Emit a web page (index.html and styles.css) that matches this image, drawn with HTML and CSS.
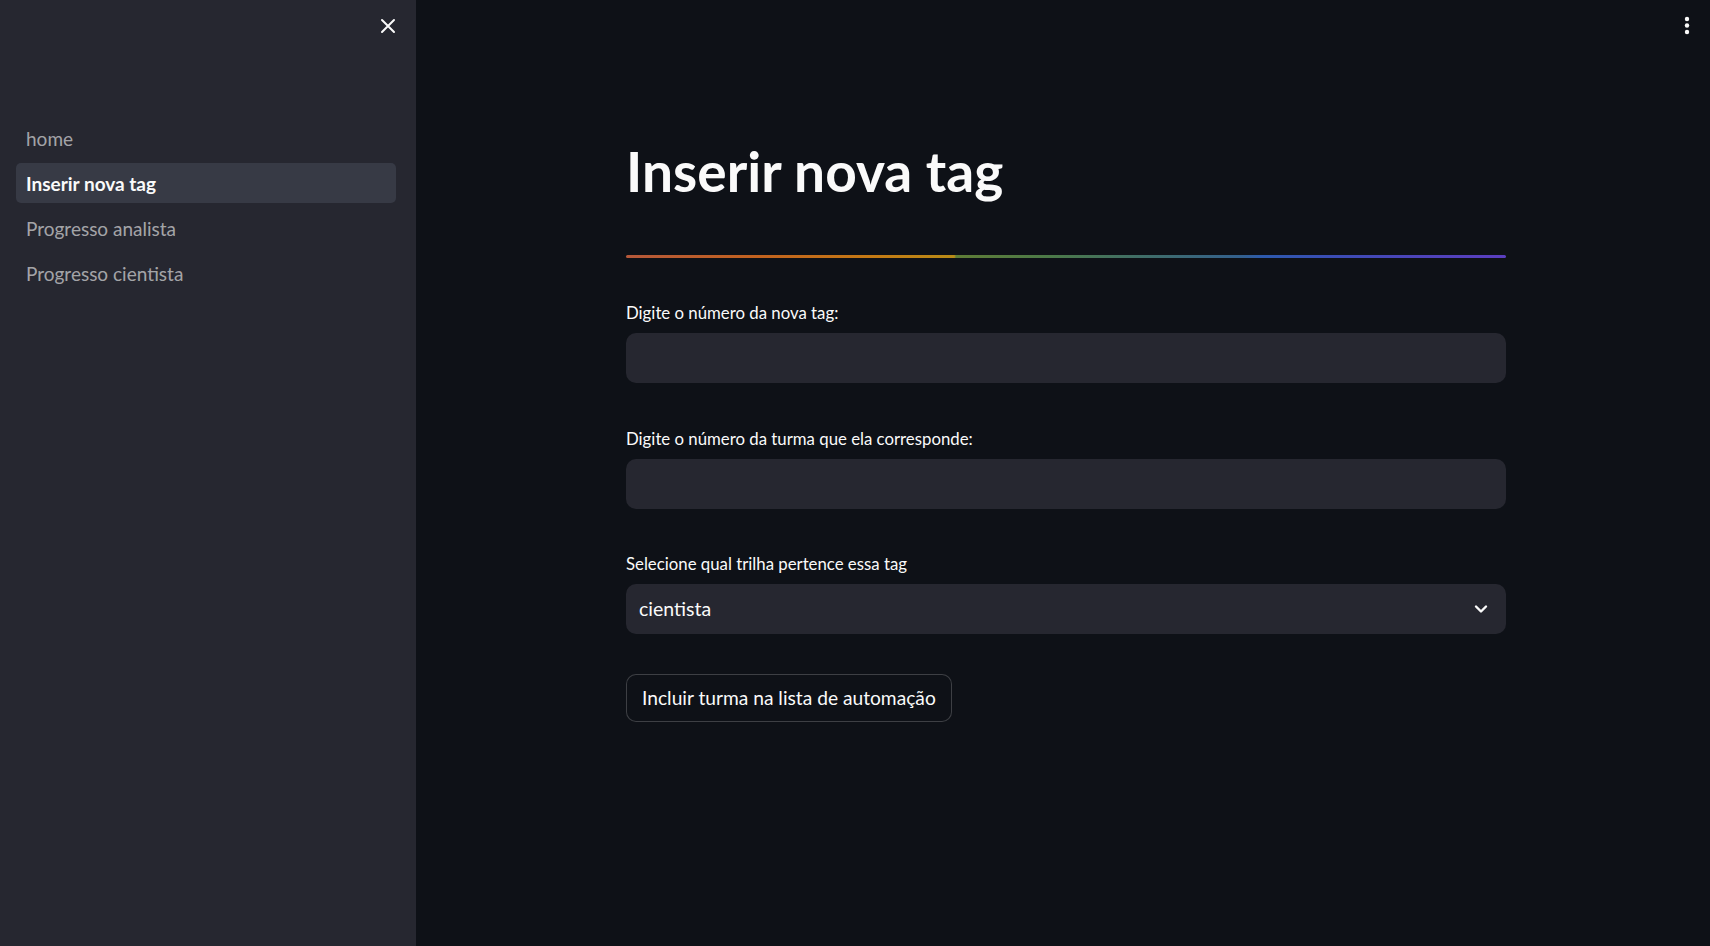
FILE: index.html
```html
<!DOCTYPE html>
<html lang="pt">
<head>
<meta charset="utf-8">
<title>Inserir nova tag</title>
<link rel="stylesheet" href="styles.css">
</head>
<body>
<div class="app">
  <aside class="sidebar">
    <div class="sidebar-header">
      <button class="close-btn" aria-label="Fechar">
        <svg width="16" height="16" viewBox="0 0 16 16"><path d="M2 2 L14 14 M14 2 L2 14" stroke="#fafafa" stroke-width="2" stroke-linecap="round" fill="none"/></svg>
      </button>
    </div>
    <nav class="nav">
      <a class="nav-item">home</a>
      <a class="nav-item active">Inserir nova tag</a>
      <a class="nav-item">Progresso analista</a>
      <a class="nav-item">Progresso cientista</a>
    </nav>
  </aside>
  <main class="main">
    <button class="menu-btn" aria-label="Menu">
      <svg width="6" height="20" viewBox="0 0 6 20"><circle cx="3" cy="3" r="2.2" fill="#fafafa"/><circle cx="3" cy="9.5" r="2.2" fill="#fafafa"/><circle cx="3" cy="16" r="2.2" fill="#fafafa"/></svg>
    </button>
    <div class="content">
      <h1 class="title">Inserir nova tag</h1>
      <div class="divider"></div>
      <div class="field">
        <label class="label">Digite o número da nova tag:</label>
        <div class="input"></div>
      </div>
      <div class="field">
        <label class="label">Digite o número da turma que ela corresponde:</label>
        <div class="input"></div>
      </div>
      <div class="field">
        <label class="label">Selecione qual trilha pertence essa tag</label>
        <div class="input select">
          <span class="select-value">cientista</span>
          <svg class="chevron" width="14" height="10" viewBox="0 0 14 10"><path d="M2 2.5 L7 7.5 L12 2.5" stroke="#fafafa" stroke-width="2.4" fill="none" stroke-linecap="round" stroke-linejoin="round"/></svg>
        </div>
      </div>
      <button class="btn">Incluir turma na lista de automação</button>
    </div>
  </main>
</div>
</body>
</html>
```
FILE: styles.css
```css
* { box-sizing: border-box; }
html, body { margin: 0; padding: 0; height: 100%; }
body {
  background: #0e1117;
  color: #fafafa;
  font-family: "Lato", "Noto Sans", sans-serif;
}
.app { display: flex; height: 100vh; }

.sidebar {
  width: 416px;
  flex: 0 0 416px;
  background: #262730;
  display: flex;
  flex-direction: column;
}
.sidebar-header {
  display: flex;
  justify-content: flex-end;
  padding: 18px 20px 0 0;
  height: 118px;
}
.close-btn {
  background: none;
  border: 0;
  padding: 0;
  width: 16px;
  height: 16px;
  cursor: pointer;
  display: flex;
}
.nav {
  display: flex;
  flex-direction: column;
  gap: 5px;
  padding: 0 20px 0 16px;
}
.nav-item {
  display: flex;
  align-items: center;
  height: 40px;
  padding: 0 10px;
  border-radius: 5px;
  font-size: 19px;
  color: rgba(250, 250, 250, 0.6);
}
.nav-item.active {
  background: rgba(151, 166, 195, 0.15);
  color: #fafafa;
  font-weight: 700;
}

.main {
  flex: 1;
  position: relative;
  padding-left: 6px;
}
.menu-btn {
  position: absolute;
  top: 16px;
  right: 20px;
  background: none;
  border: 0;
  padding: 0;
  display: flex;
}
.content {
  width: 880px;
  margin: 0 auto;
  padding-top: 138px;
  display: flex;
  flex-direction: column;
  align-items: flex-start;
}
.title {
  margin: 0;
  font-size: 55px;
  line-height: 66px;
  font-weight: 700;
  letter-spacing: 0.05px;
}
.divider {
  align-self: stretch;
  height: 3px;
  margin: 51px 0 43px;
  border-radius: 2px;
  background: linear-gradient(to right,
    #b5583a 0%, #c2621f 15%, #c47a14 28%, #b88b17 37.3%,
    #5f7d36 37.5%, #4c7a48 48%, #3e6c6c 60%, #33608e 70%,
    #2d5aae 72.4%, #3a4db5 80%, #4d44ba 90%, #5b3ec0 100%);
}
.field {
  align-self: stretch;
  display: flex;
  flex-direction: column;
  gap: 8px;
  margin-bottom: 43.5px;
}
.field:last-of-type { margin-bottom: 40px; }
.label {
  font-size: 16.8px;
  line-height: 24px;
  color: #fafafa;
}
.input {
  height: 50px;
  background: #262730;
  border-radius: 10px;
}
.select {
  display: flex;
  align-items: center;
  justify-content: space-between;
  padding: 0 18px 2px 13px;
}
.select-value { font-size: 19.5px; color: #fafafa; }
.chevron { display: block; margin-top: 2px; }
.btn {
  height: 48px;
  padding: 0 15px 2px;
  background: #0e1117;
  border: 1px solid rgba(250, 250, 250, 0.2);
  border-radius: 10px;
  color: #fafafa;
  font-family: "Lato", "Noto Sans", sans-serif;
  font-size: 19.2px;
  cursor: pointer;
}
```
